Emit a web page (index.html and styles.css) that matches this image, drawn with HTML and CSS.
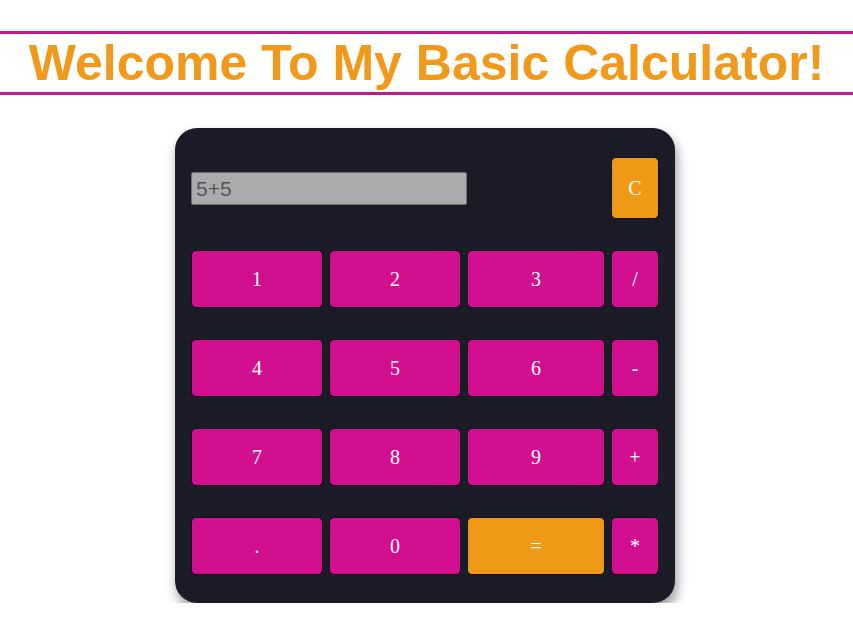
FILE: index.html
```html
<!DOCTYPE html>
<html>
<head>
<meta charset="utf-8">
<link rel="stylesheet" href="styles.css">
</head>
<body>
<h1 class="title">Welcome To My Basic Calculator!</h1>
<div class="calc">
  <div class="grid">
    <div class="display-cell"><input class="display" type="text" value="5+5"></div>
    <button class="btn orange">C</button>
    <button class="btn">1</button>
    <button class="btn">2</button>
    <button class="btn">3</button>
    <button class="btn">/</button>
    <button class="btn">4</button>
    <button class="btn">5</button>
    <button class="btn">6</button>
    <button class="btn">-</button>
    <button class="btn">7</button>
    <button class="btn">8</button>
    <button class="btn">9</button>
    <button class="btn">+</button>
    <button class="btn">.</button>
    <button class="btn">0</button>
    <button class="btn orange">=</button>
    <button class="btn">*</button>
  </div>
</div>
</body>
</html>
```
FILE: styles.css
```css
html, body {
  margin: 0;
  padding: 0;
  background: #ffffff;
}
.title {
  margin: 31px 0 0;
  border-top: 3px solid #c0198a;
  border-bottom: 3px solid #c0198a;
  font-family: "Liberation Sans", Arial, sans-serif;
  font-weight: bold;
  font-size: 50px;
  line-height: 58px;
  color: #f0991a;
  text-align: center;
}
.calc {
  width: 468px;
  margin: 33px 0 0 calc(50% - 251.5px);
  padding: 29px 16px 28px;
  background: #1b1c28;
  border-radius: 22px;
  box-shadow: 2px 7px 12px rgba(0, 0, 0, 0.4);
}
.grid {
  display: grid;
  grid-template-columns: 132px 132px 138px 48px;
  grid-template-rows: 62px 58px 58px 58px 58px;
  column-gap: 6px;
  row-gap: 31px;
}
.display-cell {
  grid-column: 1 / 4;
  display: flex;
  align-items: center;
}
.display {
  box-sizing: border-box;
  width: 276px;
  height: 33px;
  margin: 1px 0 0;
  padding: 0 4px;
  background: #abaaad;
  border: 1px solid #6f6f74;
  border-radius: 2px;
  font-family: "Liberation Sans", Arial, sans-serif;
  font-size: 21px;
  color: #555559;
  outline: none;
}
.btn {
  box-sizing: border-box;
  margin: 0;
  padding: 0;
  background: #d10f8f;
  border: 1px solid #0d0d12;
  border-radius: 5px;
  color: #ffffff;
  font-family: "Liberation Serif", "Times New Roman", serif;
  font-size: 20px;
}
.btn.orange {
  background: #ef9a16;
}
```
